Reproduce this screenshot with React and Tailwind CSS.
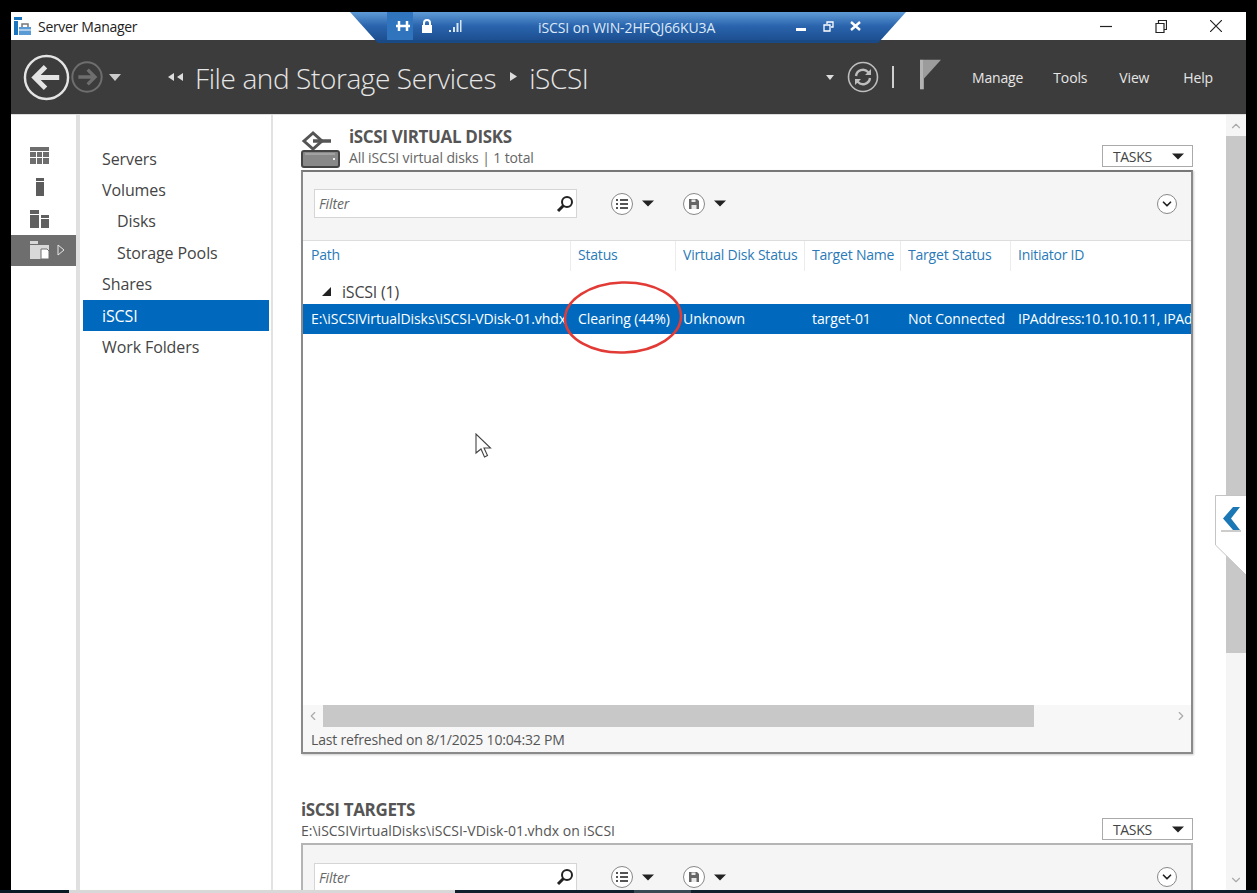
import { ChevronLeft, ChevronRight, ChevronUp, ChevronDown } from 'lucide-react'

const font = 'font-["Open_Sans","Noto_Sans",sans-serif]'

const Caret = ({ className = '' }) => (
  <svg width="14" height="7" viewBox="0 0 14 7" className={className}><path d="M0 0h14L7 7z" fill="#222" /></svg>
)

const BackArrow = ({ size, stroke }) => (
  <svg width={size} height={size} viewBox="0 0 48 48">
    <circle cx="24" cy="24" r="22" fill="none" stroke={stroke} strokeWidth="2.5" />
    <path d="M37 24H13M23 13L12 24l11 11" fill="none" stroke={stroke} strokeWidth="5" />
  </svg>
)

function RailIcon({ children, active }) {
  return (
    <div className={`h-[31.5px] flex items-center pl-[18px] relative ${active ? 'bg-[#6e6e6e]' : ''}`}>
      <svg width="21" height="20" viewBox="0 0 21 20">{children}</svg>
      {active && (
        <svg width="8" height="12" viewBox="0 0 8 12" className="ml-[7px]">
          <path d="M1 1l6 5-6 5z" fill="none" stroke="#e8e8e8" strokeWidth="1" />
        </svg>
      )}
    </div>
  )
}

function NavItem({ label, sub, active }) {
  return (
    <div className={`h-[31.4px] flex items-center text-[16px] tracking-[-0.1px] pr-1 ${sub ? 'pl-[34px]' : 'pl-[19px]'} ${active ? 'bg-[#0069bd] text-white' : 'text-[#444]'}`}>
      {label}
    </div>
  )
}

function RoundIcon({ children }) {
  return (
    <span className="w-[22px] h-[22px] rounded-full border border-[#888] bg-white flex items-center justify-center">
      <svg width="14" height="14" viewBox="0 0 14 14">{children}</svg>
    </span>
  )
}

const ListGlyph = () => (
  <path d="M1 3h2M1 7h2M1 11h2M5 3h8M5 7h8M5 11h8" stroke="#555" strokeWidth="1.8" />
)
const SaveGlyph = () => (
  <>
    <path d="M2 2h8l2 2v8H2z" fill="#666" />
    <path d="M4.500 2.500h4v2.500h-4zM4.500 8h5v4h-5z" fill="#e8e8e8" />
  </>
)

function Toolbar({ last }) {
  return (
    <div className={`bg-[#f5f5f5] flex items-center pl-[11px] pr-[14px] ${last ? 'h-[62px] pt-[2px]' : 'h-[69px] pb-[5px] border-b border-[#ddd]'}`}>
      <div className="w-[263px] h-[29px] bg-white border border-[#d5d5d5] flex items-center pl-1 pr-[2px]">
        <span className="italic text-[14px] tracking-[-0.1px] text-[#666] flex-1">Filter</span>
        <svg width="18" height="18" viewBox="0 0 18 18">
          <circle cx="11" cy="7" r="5" fill="none" stroke="#222" strokeWidth="2" />
          <path d="M7.500 10.500L2 16" stroke="#222" strokeWidth="3" />
        </svg>
      </div>
      <div className="ml-[34px] flex items-center gap-[9px]">
        <RoundIcon><ListGlyph /></RoundIcon>
        <Caret className="w-[12px]" />
      </div>
      <div className="ml-[29px] flex items-center gap-[9px]">
        <RoundIcon><SaveGlyph /></RoundIcon>
        <Caret className="w-[12px]" />
      </div>
      <span className="ml-auto w-[20px] h-[20px] rounded-full border border-[#888] bg-white flex items-center justify-center">
        <ChevronDown size={14} strokeWidth={3} className="text-[#222]" />
      </span>
    </div>
  )
}

function TasksButton() {
  return (
    <div className="w-[91px] h-[22px] border border-[#aaa] bg-white flex items-center pl-[10px] pr-[8px] text-[14px] text-[#444] justify-between">
      TASKS
      <Caret className="w-[12px]" />
    </div>
  )
}

const columns = [
  { name: 'Path', value: 'E:\\iSCSIVirtualDisks\\iSCSI-VDisk-01.vhdx', w: 'w-[268px] pl-[8px]' },
  { name: 'Status', value: 'Clearing (44%)', w: 'w-[105px] pl-[7px]' },
  { name: 'Virtual Disk Status', value: 'Unknown', w: 'w-[129px] pl-[7px]' },
  { name: 'Target Name', value: 'target-01', w: 'w-[96px] pl-[7px]' },
  { name: 'Target Status', value: 'Not Connected', w: 'w-[110px] pl-[7px]' },
  { name: 'Initiator ID', value: 'IPAddress:10.10.10.11, IPAd', w: 'flex-1 pl-[7px] tracking-[-0.25px]' },
]

export default function App() {
  return (
    <div className={`w-[1257px] h-[893px] bg-black overflow-hidden relative pt-[12px] px-[11px] ${font} tracking-[-0.35px]`}>
      <div className="w-[1235px] h-[878px] bg-white flex flex-col overflow-hidden">

        {/* title bar */}
        <div className="h-[28px] shrink-0 flex items-center bg-white">
          <svg width="19" height="20" viewBox="0 0 19 20" className="ml-[2px]">
            <path d="M1 1h8v3H1zM1 5h4v14H1z" fill="#1c75bc" />
            <path d="M6 11h12v8H6z" fill="#5a9bd5" />
            <path d="M9 11V8h6v3" fill="none" stroke="#777" strokeWidth="1.5" />
            <path d="M6 14h12" stroke="#fff" />
          </svg>
          <span className="ml-[6px] text-[14px] tracking-[-0.3px] text-[#222]">Server Manager</span>
          <div className="ml-auto flex items-center text-[#222] mr-[24px]">
            <svg width="12" height="12" viewBox="0 0 12 12"><path d="M0 6.500h12" stroke="#222" strokeWidth="1.200" /></svg>
            <svg width="12" height="13" viewBox="0 0 12 13" className="ml-[43px]">
              <path d="M1 3.500h8v9H1zM3.500 3V.500h8v9H9" fill="none" stroke="#222" strokeWidth="1.200" />
            </svg>
            <svg width="12" height="12" viewBox="0 0 12 12" className="ml-[43px]">
              <path d="M0 0l12 12M12 0L0 12" stroke="#222" strokeWidth="1.200" />
            </svg>
          </div>
        </div>

        {/* header */}
        <div className="h-[74px] shrink-0 bg-[#3c3c3c] flex items-center text-[#e6e6e6]">
          <span className="ml-[12px]"><BackArrow size={47} stroke="#e4e4e4" /></span>
          <span className="ml-[1px]"><BackRight /></span>
          <svg width="12" height="7" viewBox="0 0 12 7" className="ml-[6px]"><path d="M0 0h12L6 7z" fill="#ccc" /></svg>
          <svg width="16" height="8" viewBox="0 0 16 8" className="ml-[47px]">
            <path d="M6 0v8L0 4zM15 0v8L9 4z" fill="#ddd" />
          </svg>
          <span className="ml-[11px] text-[28px] font-light tracking-[-0.4px] leading-none mt-[2px]">File and Storage Services</span>
          <svg width="7" height="9" viewBox="0 0 7 9" className="ml-[14px] -mt-[2px]"><path d="M0 0v9l7-4.500z" fill="#ddd" /></svg>
          <span className="ml-[12px] text-[28px] font-light tracking-[-0.4px] leading-none mt-[2px]">iSCSI</span>
          <div className="ml-auto flex items-center">
            <svg width="8" height="5" viewBox="0 0 8 5"><path d="M0 0h8L4 5z" fill="#ddd" /></svg>
            <svg width="32" height="32" viewBox="0 0 32 32" className="ml-[13px]">
              <circle cx="16" cy="16" r="14.500" fill="none" stroke="#bdbdbd" strokeWidth="1.600" />
              <path d="M9 15a7 7 0 0 1 12-4l2 2M23 17a7 7 0 0 1-12 4l-2-2" fill="none" stroke="#bdbdbd" strokeWidth="2.400" />
              <path d="M24 8v6h-6zM8 24v-6h6z" fill="#bdbdbd" />
            </svg>
            <span className="ml-[13px] w-[2px] h-[22px] bg-[#cfcfcf]" />
            <svg width="21" height="31" viewBox="0 0 22 31" className="ml-[26px] -mt-[6px]">
              <path d="M0 0h4v31H0z" fill="#b4b4b4" />
              <path d="M4 0h18l-18 20z" fill="#9c9c9c" />
            </svg>
            <div className="flex items-center text-[14px] tracking-[-0.15px] ml-[31px] mr-[33px]">
              <span>Manage</span>
              <span className="ml-[30px]">Tools</span>
              <span className="ml-[32px]">View</span>
              <span className="ml-[34px]">Help</span>
            </div>
          </div>
        </div>

        {/* body */}
        <div className="flex-1 min-h-0 flex border-t border-[#ddd]">
          <div className="w-[65px] shrink-0 pt-[25px]">
            <RailIcon>
              <path d="M1 1h19v4H1zM1 6h6v5H1zM8 6h5v5H8zM14 6h6v5h-6zM1 12h6v6H1zM8 12h5v6H8zM14 12h6v6h-6z" fill="#6e6e6e" />
            </RailIcon>
            <RailIcon>
              <path d="M7 1h8v3H7zM7 5h8v14H7z" fill="#5c5c5c" />
            </RailIcon>
            <RailIcon>
              <path d="M1 1h9v4H1zM1 6h9v13H1zM12 6h8v3h-8zM12 10h8v9h-8z" fill="#606060" />
            </RailIcon>
            <RailIcon active>
              <path d="M1 1h8v3H1zM1 5h19v14H1z" fill="#d8d8d8" />
              <path d="M12 9h6l2 2v8h-8z" fill="#fff" stroke="#6e6e6e" />
            </RailIcon>
          </div>
          <div className="w-[4px] shrink-0 bg-[#e0e0e0]" />
          <div className="w-[193px] shrink-0 border-r-2 border-[#e2e2e2] pt-[28px] pl-[3px] pr-[2px]">
            <NavItem label="Servers" />
            <NavItem label="Volumes" />
            <NavItem label="Disks" sub />
            <NavItem label="Storage Pools" sub />
            <NavItem label="Shares" />
            <NavItem label="iSCSI" active />
            <NavItem label="Work Folders" />
          </div>

          {/* main */}
          <div className="flex-1 min-w-0 pl-[29px] pt-[9px]">
            <div className="flex items-end h-[43px] w-[891px]">
              <svg width="40" height="38" viewBox="0 0 40 38" className="mb-[-1px] mr-[8px] -ml-[1px]">
                <path d="M12 3L3 11l9 8 9-8z" fill="none" stroke="#555" strokeWidth="3" />
                <path d="M12 11h18" stroke="#555" strokeWidth="3.500" />
                <rect x="1" y="21" width="37" height="16" rx="2" fill="#888" stroke="#444" strokeWidth="2" />
                <path d="M4 24h30" stroke="#bbb" />
                <rect x="32" y="28" width="2" height="2" fill="#eee" />
              </svg>
              <div className="flex-1 -mb-[1px]">
                <div className="text-[17px] font-bold text-[#555] leading-[22px]">iSCSI VIRTUAL DISKS</div>
                <div className="text-[14px] tracking-[-0.12px] text-[#666] leading-[20px]">All iSCSI virtual disks | 1 total</div>
              </div>
              <TasksButton />
            </div>

            <div className="mt-[3px] -ml-[1px] h-[584px] w-[892px] border-2 border-[#8a8a8a] border-t-[#777] flex flex-col shadow-[1px_1px_2px_#ccc]">
              <Toolbar />
              <div className="flex h-[30px] text-[14px] tracking-[-0.2px] text-[#2a7ab8] shrink-0">
                {columns.map(c => (
                  <div key={c.name} className={`${c.w} pb-[3px] flex items-center border-r border-[#ececec] last:border-0 whitespace-nowrap overflow-hidden`}>
                    {c.name}
                  </div>
                ))}
              </div>
              <div className="h-[33px] flex items-center text-[16px] tracking-[-0.2px] text-[#444] shrink-0 pt-[8px]">
                <svg width="9" height="9" viewBox="0 0 9 9" className="ml-[19px]"><path d="M9 0v9H0z" fill="#222" /></svg>
                <span className="ml-[11px]">iSCSI (1)</span>
              </div>
              <div className="flex h-[30px] bg-[#0069bd] text-white text-[14px] tracking-[-0.08px] shrink-0">
                {columns.map(c => (
                  <div key={c.name} className={`${c.w} pb-[2px] flex items-center whitespace-nowrap overflow-hidden`}>
                    {c.value}
                  </div>
                ))}
              </div>
              <div className="flex-1" />
              <div className="h-[22px] bg-[#f7f7f7] flex items-center shrink-0">
                <ChevronLeft size={14} className="text-[#aaa] ml-[3px] mr-[3px]" />
                <div className="w-[711px] h-full bg-[#c8c8c8]" />
                <ChevronRight size={14} className="text-[#aaa] ml-auto mr-[3px]" />
              </div>
              <div className="h-[25px] bg-[#f7f7f7] text-[14px] tracking-[-0.17px] text-[#555] flex items-center pl-[8px] shrink-0">
                Last refreshed on 8/1/2025 10:04:32 PM
              </div>
            </div>

            <div className="mt-[44px] flex items-end h-[43px] w-[891px] -ml-[1px]">
              <div className="flex-1">
                <div className="text-[17px] font-bold text-[#555] leading-[22px]">iSCSI TARGETS</div>
                <div className="text-[14px] tracking-normal text-[#555] leading-[20px]">E:\iSCSIVirtualDisks\iSCSI-VDisk-01.vhdx on iSCSI</div>
              </div>
              <div className="translate-x-[1px] -translate-y-[1px]"><TasksButton /></div>
            </div>
            <div className="mt-[2px] -ml-[1px] w-[892px] border-2 border-b-0 border-[#b5b5b5]">
              <Toolbar last />
            </div>
          </div>

          {/* page scrollbar */}
          <div className="w-[20px] shrink-0 bg-[#f5f5f5] flex flex-col items-center">
            <div className="h-[21px] flex items-center"><ChevronUp size={14} className="text-[#aaa]" /></div>
            <div className="w-full h-[517px] bg-[#c8c8c8]" />
            <div className="mt-auto h-[20px] flex items-center"><ChevronDown size={14} className="text-[#aaa]" /></div>
          </div>
        </div>
      </div>

      {/* remote desktop connection bar */}
      <div className="absolute left-[350px] top-[12px] w-[556px] h-[31px] bg-gradient-to-b from-[#5f9bd6] via-[#2a64ad] to-[#1d4f91] border-b-[3px] border-[#1a4a85] [clip-path:polygon(0_0,100%_0,95%_100%,5%_100%)]">
        <div className="h-full flex items-center text-[#dce9f6] relative">
          <div className="absolute left-[37px] top-0 w-[26px] h-full bg-[#2f74bd]" />
          <svg width="14" height="12" viewBox="0 0 14 12" className="ml-[46px] relative">
            <path d="M0 6h14M3 1v10M11 1v10" stroke="#fff" strokeWidth="2.500" />
          </svg>
          <svg width="12" height="14" viewBox="0 0 12 14" className="ml-[11px]">
            <path d="M3 6V4a3 3 0 0 1 6 0v2" fill="none" stroke="#fff" strokeWidth="2" />
            <path d="M1 6h10v8H1z" fill="#fff" />
          </svg>
          <svg width="14" height="14" viewBox="0 0 14 14" className="ml-[15px]">
            <path d="M1 11h2v2H1zM5 8h2v5H5zM8.500 4h2v9h-2zM12 1h1.500v12H12z" fill="#d8e6f4" />
          </svg>
          <span className="ml-[76px] text-[14px] tracking-[-0.1px] w-[258px] mt-[2px]">iSCSI on WIN-2HFQJ66KU3A</span>
          <svg width="10" height="4" viewBox="0 0 10 4" className="mt-[8px]"><path d="M0 0h10v3H0z" fill="#fff" /></svg>
          <svg width="11" height="11" viewBox="0 0 11 11" className="ml-[17px]">
            <path d="M4 3V1h6v5H8M1 4h6v6H1z" fill="none" stroke="#fff" strokeWidth="1.300" />
          </svg>
          <svg width="11" height="10" viewBox="0 0 11 10" className="ml-[16px]">
            <path d="M1 1l9 8M10 1l-9 8" stroke="#fff" strokeWidth="2.400" />
          </svg>
        </div>
      </div>

      {/* red annotation */}
      <svg width="122" height="78" viewBox="0 0 122 78" className="absolute left-[564px] top-[279px]">
        <ellipse cx="59" cy="38.500" rx="58" ry="35" transform="rotate(-2 59 38.500)" fill="none" stroke="#e23b36" strokeWidth="2.600" />
      </svg>

      {/* mouse cursor */}
      <svg width="17" height="25" viewBox="0 0 17 25" className="absolute left-[475px] top-[433px]">
        <path d="M1 1v19l5-4 3.500 8 3-1.500-3.500-7.500h6.500z" fill="#fff" stroke="#444" strokeWidth="1.100" />
      </svg>

      {/* tasks flyout tab */}
      <svg width="31" height="81" viewBox="0 0 31 81" className="absolute left-[1215px] top-[495px]">
        <path d="M31 .500H.500V50L31 80" fill="#fff" stroke="#c4c4c4" />
        <path d="M18 12h7l-9 11.500 9 11.500h-7L8 23.500z" fill="#1b78b5" />
        <path d="M6 36h20" stroke="#9a9a9a" />
      </svg>

      {/* desktop strip under the session window */}
      <div className="absolute left-0 top-[890px] w-full h-[3px] flex">
        <div className="w-[69px] bg-[#0a1a24]" />
        <div className="w-[386px] bg-[#d8d8d8]" />
        <div className="w-[179px] bg-[#10202c]" />
        <div className="w-[57px] bg-[#3a4a54]" />
        <div className="flex-1 bg-[#10202c]" />
      </div>
    </div>
  )
}

function BackRight() {
  return (
    <svg width="32" height="32" viewBox="0 0 48 48">
      <circle cx="24" cy="24" r="22" fill="none" stroke="#6e6e6e" strokeWidth="3" />
      <path d="M11 24h24M25 13l11 11-11 11" fill="none" stroke="#6e6e6e" strokeWidth="5" />
    </svg>
  )
}
